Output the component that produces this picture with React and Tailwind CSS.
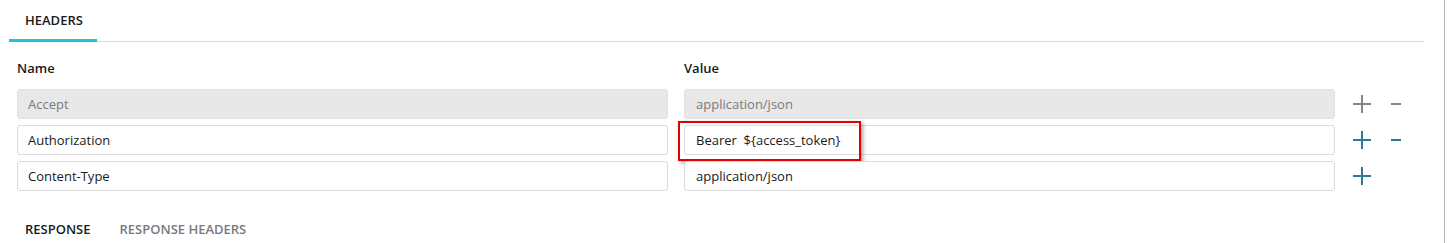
import React from "react";

function Plus({ color }) {
  return (
    <svg width="18" height="18" viewBox="0 0 18 18" className="block">
      <rect x="0" y="8" width="18" height="2" fill={color} />
      <rect x="8" y="0" width="2" height="18" fill={color} />
    </svg>
  );
}

function Minus({ color }) {
  return (
    <svg width="10" height="18" viewBox="0 0 10 18" className="block">
      <rect x="0" y="8" width="10" height="2" fill={color} />
    </svg>
  );
}

const rows = [
  { name: "Accept", value: "application/json", disabled: true, minus: true },
  { name: "Authorization", value: "Bearer\u00a0 ${access_token}", highlight: true, minus: true },
  { name: "Content-Type", value: "application/json", minus: false },
];

export default function App() {
  return (
    <div
      className="w-[1445px] h-[243px] bg-white border-r border-[#b0b0b0] text-[13px] text-[#222]"
      style={{ fontFamily: '"Open Sans", "Liberation Sans", sans-serif' }}
    >
      <div className="ml-[9px] w-[1415px] h-[42px] border-b border-[#d9d9d9] flex">
        <div className="w-[88px] h-[42px] border-b-[3px] border-[#1ec4d0] pl-[16px] pt-[11px] font-semibold text-[13px] text-[#1a1a1a] relative z-10">
          HEADERS
        </div>
      </div>

      <div className="pl-[17px] pt-[17px]">
        <div className="flex gap-[16px] leading-[18px] font-semibold text-[#1a1a1a]">
          <div className="w-[651px]">Name</div>
          <div className="w-[651px]">Value</div>
        </div>
        <div className="mt-[12px] flex flex-col gap-[6px]">
          {rows.map((r, i) => (
            <div key={i} className="flex items-center">
              <div
                className={
                  "w-[651px] h-[30px] rounded-[3px] border px-[10px] pt-[1px] flex items-center " +
                  (r.disabled
                    ? "bg-[#e8e8e8] border-[#e2e2e2] text-[#7a7a7a]"
                    : "bg-white border-[#dcdcdc] text-[#1a1a1a]")
                }
              >
                {r.name}
              </div>
              <div className="ml-[16px] relative">
                <div
                  className={
                    "w-[651px] h-[30px] rounded-[3px] border px-[11px] pt-[1px] flex items-center whitespace-pre " +
                    (r.disabled
                      ? "bg-[#e8e8e8] border-[#e2e2e2] text-[#7a7a7a]"
                      : "bg-white border-[#dcdcdc] text-[#1a1a1a]")
                  }
                >
                  {r.value}
                </div>
                {r.highlight && (
                  <div className="absolute left-[-6px] top-[-4px] w-[183px] h-[40px] border-2 border-[#e30000] shadow-[2px_2px_4px_rgba(0,0,0,0.35)] pointer-events-none" />
                )}
              </div>
              <div className="ml-[18px] w-[18px]">
                <Plus color={r.disabled ? "#858585" : "#2a7b95"} />
              </div>
              <div className="ml-[20px] w-[10px]">
                {r.minus && <Minus color={r.disabled ? "#858585" : "#2a7b95"} />}
              </div>
            </div>
          ))}
        </div>
      </div>

      <div className="pl-[25px] mt-[29px] flex gap-[29px] font-semibold text-[13px] leading-[18px]">
        <span className="text-[#1a1a1a]">RESPONSE</span>
        <span className="text-[#7a7a7a]">RESPONSE HEADERS</span>
      </div>
    </div>
  );
}
